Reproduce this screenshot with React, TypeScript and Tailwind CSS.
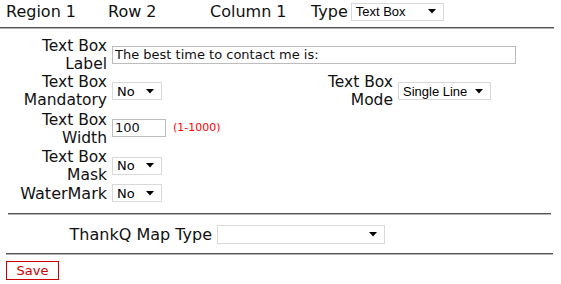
const font = "font-['DejaVu_Sans',Verdana,sans-serif]";

const Arrow = () => (
  <svg width="8" height="5" viewBox="0 0 8 5" className="shrink-0">
    <path d="M0 0 L8 0 L4 4.5 Z" fill="#000" />
  </svg>
);

const Select = ({
  value,
  width,
  height = 18,
  arial = false,
}: {
  value: string;
  width: number;
  height?: number;
  arial?: boolean;
}) => (
  <div
    className={`flex items-center justify-between border border-[#d9d9d9] bg-white pl-[4px] pr-[7px] text-[13px] leading-none text-black ${
      arial ? "font-['Liberation_Sans',Arial,sans-serif]" : font
    }`}
    style={{ width, height }}
  >
    <span>{value}</span>
    <Arrow />
  </div>
);

const Rule = ({ className }: { className: string }) => (
  <div className={className}>
    <div className="h-px bg-[#555]" />
    <div className="h-px bg-[#b5b5b5]" />
  </div>
);

const Label = ({ lines, w = 107 }: { lines: string[]; w?: number }) => (
  <div
    className={`shrink-0 text-right ${
      lines.length > 1 ? "text-[15.5px] leading-[18.1px]" : "text-[16px] leading-[19px]"
    }`}
    style={{ width: w }}
  >
    {lines[0]}
    {lines[1] && (
      <>
        <br />
        {lines[1]}
      </>
    )}
  </div>
);

export default function App() {
  return (
    <div className={`h-[284px] w-[561px] bg-white text-[#111] ${font}`}>
      {/* header */}
      <div className="flex h-[22px] items-center pl-[6px] pt-[1px] text-[16px]">
        <div className="w-[102px]">Region 1</div>
        <div className="w-[102px]">Row 2</div>
        <div className="w-[101px]">Column 1</div>
        <div className="mr-[3px]">Type</div>
        <Select value="Text Box" width={93} arial />
      </div>
      <Rule className="ml-0 mt-[5px] w-[554px]" />

      <div className="mt-[8px] flex flex-col">
        <div className="flex items-center gap-[5px]">
          <Label lines={["Text Box", "Label"]} />
          <div className="flex h-[18px] w-[404px] items-center border border-[#bdbdbd] px-[2px] text-[13px]">
            The best time to contact me is:
          </div>
        </div>

        <div className="flex items-center">
          <Label lines={["Text Box", "Mandatory"]} />
          <div className="ml-[5px]">
            <Select value="No" width={50} />
          </div>
          <div className="ml-[139px] flex items-center gap-[5px]">
            <Label lines={["Text Box", "Mode"]} w={92} />
            <Select value="Single Line" width={93} arial />
          </div>
        </div>

        <div className="mt-[2px] flex items-center gap-[5px]">
          <Label lines={["Text Box", "Width"]} />
          <div className="-mt-[3px] flex h-[18px] w-[54px] items-center border border-[#bdbdbd] px-[2px] text-[13px]">
            100
          </div>
          <div className="-mt-[3px] ml-[2px] text-[11px] text-[#ff0000]">(1-1000)</div>
        </div>

        <div className="flex items-center gap-[5px]">
          <Label lines={["Text Box", "Mask"]} />
          <Select value="No" width={50} />
        </div>

        <div className="flex items-center gap-[5px]">
          <Label lines={["WaterMark"]} />
          <Select value="No" width={50} />
        </div>
      </div>

      <Rule className="ml-[8px] mt-[10px] w-[543px]" />

      <div className="mt-[10px] flex items-center gap-[5px]">
        <Label lines={["ThankQ Map Type"]} w={212} />
        <Select value="" width={168} height={19} />
      </div>

      <Rule className="ml-[6px] mt-[9px] w-[547px]" />

      <div className="ml-[6px] mt-[6px] flex h-[19px] w-[53px] items-center justify-center border border-[#cc0000] text-[13px] text-[#cc0000]">
        Save
      </div>
    </div>
  );
}
